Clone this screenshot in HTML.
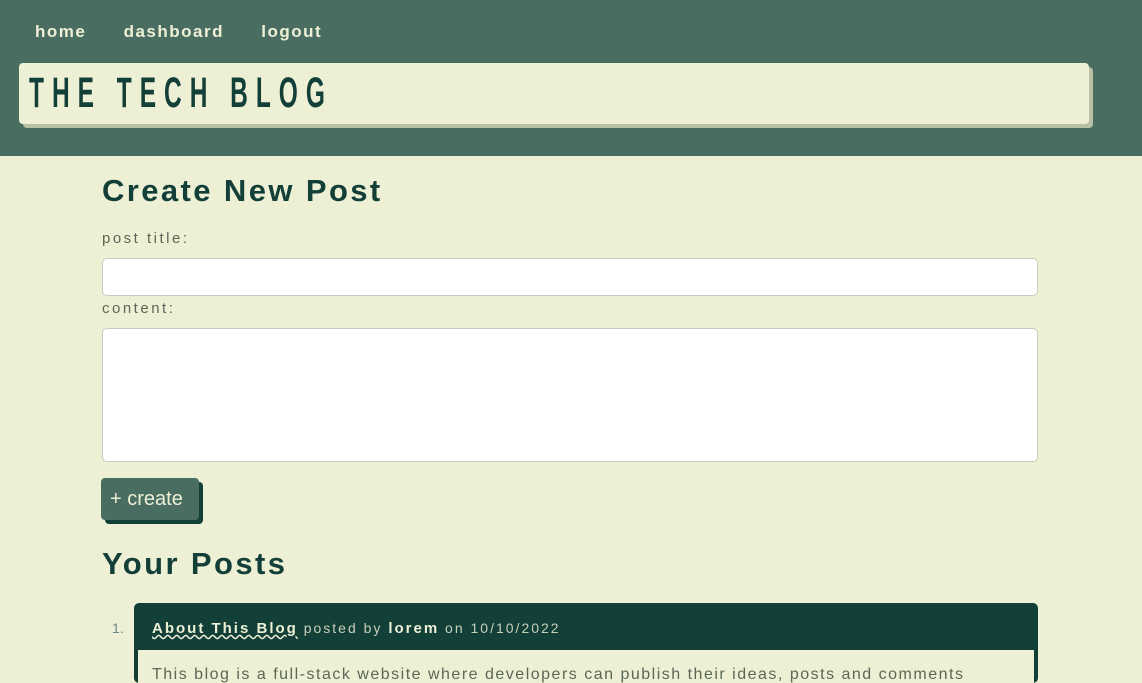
<!DOCTYPE html>
<html><head><style>
*{box-sizing:border-box;margin:0;padding:0}
body{width:1142px;height:668px;overflow:hidden;background:#eef0d6;font-family:"Liberation Sans",sans-serif;color:#123f38}
header{background:#4a6d61;height:156px;position:relative}
nav{position:absolute;top:22px;left:35px;font-weight:bold;font-size:17px;letter-spacing:1.5px;color:#eef0d6}
nav span{margin-right:31px}
.title{position:absolute;left:19px;top:63px;width:1070px;height:61px;background:#eef0d6;border-radius:4px;box-shadow:4px 4px 0 #b8c0a6}
.title h1{font-family:"Liberation Sans Narrow","Liberation Sans",sans-serif;font-size:43px;font-weight:bold;letter-spacing:14px;position:absolute;left:10px;top:6px;transform:scaleX(.57);transform-origin:left;color:#123f38;white-space:nowrap}
main{position:absolute;left:102px;top:170px;width:936px}
h2{font-size:31px;letter-spacing:2.4px;font-weight:bold}
label{display:block;font-size:15px;letter-spacing:2.5px;color:#5b6757}
.in{background:#fff;border:1px solid #c9cbc0;border-radius:5px}
.btn{position:absolute;left:-1px;top:308px;width:98px;height:42px;background:#4a6d61;border-radius:4px;box-shadow:4px 4px 0 #123f38;color:#eef0d6;font-size:20px;padding:10px 0 0 9px}
.card{position:absolute;left:134px;top:603px;width:904px;height:80px;background:#123f38;border-radius:5px}
.card .hd{color:#c8d0b8;font-size:14px;letter-spacing:2px;padding:17px 0 0 18px}
.card b{color:#eef0d6;font-size:15px;text-decoration:underline wavy #eef0d6}
.card .bd{position:absolute;left:4px;top:47px;right:4px;bottom:0;background:#eef0d6;color:#5b6757;font-size:16px;padding:16px 14px;white-space:nowrap;overflow:hidden;letter-spacing:1.5px}
</style></head><body>
<header>
<nav><span>home</span> <span>dashboard</span> <span>logout</span></nav>
<div class="title"><h1>THE TECH BLOG</h1></div>
</header>
<main>
<h2 style="position:absolute;top:3px">Create New Post</h2>
<label style="position:absolute;top:60px">post title:</label>
<div class="in" style="position:absolute;top:88px;width:936px;height:38px"></div>
<label style="position:absolute;top:130px">content:</label>
<div class="in" style="position:absolute;top:158px;width:936px;height:134px"></div>
<div class="btn">+ create</div>
<h2 style="position:absolute;top:376px">Your Posts</h2>
<div style="position:absolute;left:10px;top:450px;color:#6a8a8a;font-size:14px">1.</div>
</main>
<div class="card"><div class="hd"><b>About This Blog</b> posted by <b style="text-decoration:none">lorem</b> on 10/10/2022</div>
<div class="bd">This blog is a full-stack website where developers can publish their ideas, posts and comments</div></div>
</body></html>
